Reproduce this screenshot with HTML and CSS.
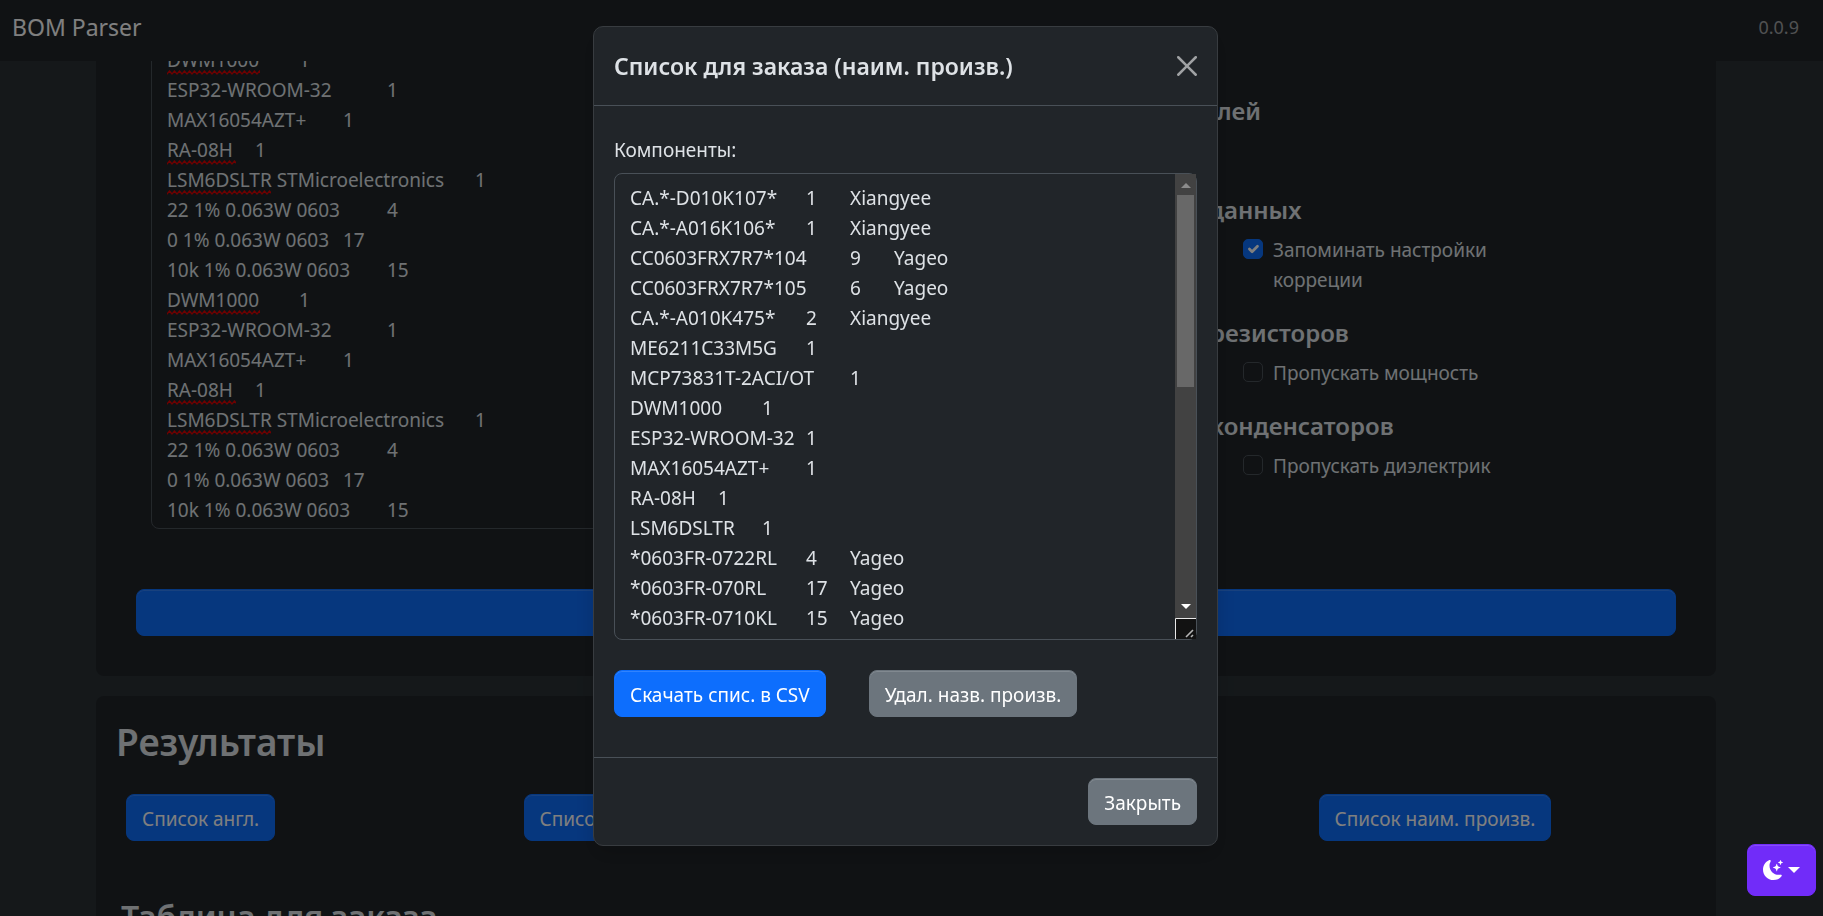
FILE: index.html
```html
<!DOCTYPE html>
<html lang="ru">
<head>
<meta charset="utf-8">
<title>BOM Parser</title>
<link rel="stylesheet" href="styles.css">
</head>
<body>
<header class="navbar">
  <a class="brand" href="#">BOM Parser</a>
  <span class="version">0.0.9</span>
</header>

<main class="page">
  <section class="panel panel-input">
    <div class="input-grid">
      <div class="source">
        <textarea class="field source-field" spellcheck="false" aria-label="Исходный список">DWM1000 	1
ESP32-WROOM-32 		1
MAX16054AZT+ 	1
RA-08H 	1
LSM6DSLTR STMicroelectronics 	1
22 1% 0.063W 0603 	4
0 1% 0.063W 0603 	17
10k 1% 0.063W 0603 	15
DWM1000 	1
ESP32-WROOM-32 		1
MAX16054AZT+ 	1
RA-08H 	1
LSM6DSLTR STMicroelectronics 	1
22 1% 0.063W 0603 	4
0 1% 0.063W 0603 	17
10k 1% 0.063W 0603 	15</textarea>
        <svg class="spelling" width="120" height="480" aria-hidden="true">
          <defs>
            <pattern id="wave" width="5" height="5" patternUnits="userSpaceOnUse">
              <path d="M-1 4.8 0 4 2.5 1 5 4 6 4.8" fill="none" stroke="#e00000" stroke-width="1.3"/>
            </pattern>
          </defs>
          <g fill="url(#wave)">
            <rect x="0" y="25" width="93" height="5"/>
            <rect x="0" y="115" width="69" height="5"/>
            <rect x="0" y="145" width="104" height="5"/>
            <rect x="0" y="265" width="93" height="5"/>
            <rect x="0" y="355" width="69" height="5"/>
            <rect x="0" y="385" width="104" height="5"/>
          </g>
        </svg>
      </div>
      <div class="settings">
        <div class="group group-empty"><h3 class="group-title">Производителей</h3></div>
        <div class="group">
          <h3 class="group-title">Сохранение данных</h3>
          <label class="check"><input type="checkbox" checked><span>Запоминать настройки корреции</span></label>
        </div>
        <div class="group">
          <h3 class="group-title">Параметры: резисторов</h3>
          <label class="check"><input type="checkbox"><span>Пропускать мощность</span></label>
        </div>
        <div class="group">
          <h3 class="group-title">Параметры: конденсаторов</h3>
          <label class="check"><input type="checkbox"><span>Пропускать диэлектрик</span></label>
        </div>
      </div>
    </div>
    <button class="btn btn-primary btn-wide" type="button" aria-label="Обработать"></button>
  </section>

  <section class="panel panel-results">
    <h1 class="results-title">Результаты</h1>
    <div class="results-row">
      <div><button class="btn btn-primary" type="button">Список англ.</button></div>
      <div><button class="btn btn-primary" type="button">Список рус.</button></div>
      <div><button class="btn btn-primary" type="button">Список</button></div>
      <div><button class="btn btn-primary" type="button">Список наим. произв.</button></div>
    </div>
    <h2 class="table-title">Таблица для заказа</h2>
  </section>
</main>

<div class="backdrop">
  <div class="modal" role="dialog" aria-modal="true" aria-labelledby="modal-title">
    <div class="modal-header">
      <h2 class="modal-title" id="modal-title">Список для заказа (наим. произв.)</h2>
      <button class="close" type="button" aria-label="Закрыть окно">
        <svg viewBox="0 0 16 16" width="20" height="20" fill="currentColor"><path d="M.293.293a1 1 0 0 1 1.414 0L8 6.586 14.293.293a1 1 0 1 1 1.414 1.414L9.414 8l6.293 6.293a1 1 0 0 1-1.414 1.414L8 9.414l-6.293 6.293a1 1 0 0 1-1.414-1.414L6.586 8 .293 1.707a1 1 0 0 1 0-1.414z"/></svg>
      </button>
    </div>
    <div class="modal-body">
      <label class="label" for="parts">Компоненты:</label>
      <div class="parts">
        <textarea class="field parts-field" id="parts" rows="15" spellcheck="false">CA.*-D010K107*	1	Xiangyee
CA.*-A016K106*	1	Xiangyee
CC0603FRX7R7*104	9	Yageo
CC0603FRX7R7*105	6	Yageo
CA.*-A010K475*	2	Xiangyee
ME6211C33M5G	1
MCP73831T-2ACI/OT	1
DWM1000 	1
ESP32-WROOM-32	1
MAX16054AZT+	1
RA-08H	1
LSM6DSLTR	1
*0603FR-0722RL	4	Yageo
*0603FR-070RL	17	Yageo
*0603FR-0710KL	15	Yageo</textarea>
        <div class="scrollbar" aria-hidden="true">
          <span class="arrow arrow-up"></span>
          <span class="thumb"></span>
          <span class="arrow arrow-down"></span>
          <svg class="grip" width="21" height="21" viewBox="0 0 21 21"><path d="M0 0H21V21H0z" fill="#121212"/><path d="M.5 21V.5H21" fill="none" stroke="#e8e8e8"/><path d="M11 19 18 12M16 19 18 17" stroke="#b5b5b5" stroke-width="1.6"/></svg>
        </div>
      </div>
      <div class="actions">
        <button class="btn btn-primary" type="button">Скачать спис. в CSV</button>
        <button class="btn btn-secondary" type="button">Удал. назв. произв.</button>
      </div>
    </div>
    <div class="modal-footer">
      <button class="btn btn-secondary" type="button">Закрыть</button>
    </div>
  </div>
</div>

<button class="theme" type="button" aria-label="Тема">
  <svg viewBox="0 0 16 16" width="20" height="20" fill="currentColor"><path d="M6 .278a.77.77 0 0 1 .08.858 7.2 7.2 0 0 0-.878 3.46c0 4.021 3.278 7.277 7.318 7.277q.792-.001 1.533-.16a.79.79 0 0 1 .81.316.73.73 0 0 1-.031.893A8.35 8.35 0 0 1 8.344 16C3.734 16 0 12.286 0 7.71 0 4.266 2.114 1.312 5.124.06A.75.75 0 0 1 6 .278"/><path d="M10.794 3.148a.217.217 0 0 1 .412 0l.387 1.162c.173.518.579.924 1.097 1.097l1.162.387a.217.217 0 0 1 0 .412l-1.162.387a1.73 1.73 0 0 0-1.097 1.097l-.387 1.162a.217.217 0 0 1-.412 0l-.387-1.162A1.73 1.73 0 0 0 9.31 6.593l-1.162-.387a.217.217 0 0 1 0-.412l1.162-.387a1.73 1.73 0 0 0 1.097-1.097zM13.863.099a.145.145 0 0 1 .274 0l.258.774c.115.346.386.617.732.732l.774.258a.145.145 0 0 1 0 .274l-.774.258a1.16 1.16 0 0 0-.732.732l-.258.774a.145.145 0 0 1-.274 0l-.258-.774a1.16 1.16 0 0 0-.732-.732l-.774-.258a.145.145 0 0 1 0-.274l.774-.258c.346-.115.617-.386.732-.732z"/></svg>
  <span class="caret"></span>
</button>
</body>
</html>
```
FILE: styles.css
```css
* { box-sizing: border-box; }
body {
  margin: 0;
  height: 100vh;
  overflow: hidden;
  background: #2a3135;
  color: #dee2e6;
  font: 19px/30px "Noto Sans", "Open Sans", sans-serif;
}
h1, h2, h3 { margin: 0; font-weight: 600; }
button, textarea { font: inherit; }

.navbar {
  position: fixed;
  inset: 0 0 auto;
  z-index: 1;
  display: flex;
  justify-content: space-between;
  align-items: center;
  height: 61px;
  padding: 0 24px 8px 12px;
  background: #212529;
}
.brand { color: #fff; font-size: 23px; text-decoration: none; }
.version { color: #a0a2a4; font-size: 18px; }

.page {
  display: flex;
  flex-direction: column;
  gap: 20px;
  height: 100%;
  overflow: hidden;
  padding: 0 107px 0 96px;
}
.panel { flex: none; background: #212529; border-radius: 8px; }
.panel-input { padding: 37px 40px 40px; }
.input-grid {
  display: grid;
  grid-template-columns: 3fr 2fr;
  padding: 0 15px;
}
.source { position: relative; }
.field {
  display: block;
  width: 100%;
  margin: 0;
  border: 1px solid #495057;
  border-radius: 8px;
  background: #212529;
  color: #dee2e6;
  padding: 7px 15px;
  tab-size: 44px;
  white-space: pre;
  overflow: hidden;
  resize: none;
  outline: 0;
}
.source-field { height: 492px; padding-bottom: 0; }
.spelling { position: absolute; left: 16px; top: 8px; }

.settings { display: flex; flex-direction: column; gap: 23px; padding-top: 59px; }
.group { display: flex; flex-direction: column; gap: 10px; }
.group-empty { min-height: 76px; }
.group-title { font-size: 24px; line-height: 30px; white-space: nowrap; }
.check { display: flex; gap: 10px; margin-left: 186px; width: 260px; }
.check input {
  appearance: none;
  flex: none;
  width: 20px;
  height: 20px;
  margin: 4px 0 0;
  border: 1px solid #495057;
  border-radius: 5px;
}
.check input:checked {
  border-color: #0d6efd;
  background: #0d6efd url("data:image/svg+xml,%3Csvg xmlns='http://www.w3.org/2000/svg' viewBox='0 0 20 20'%3E%3Cpath fill='none' stroke='%23fff' stroke-linecap='round' stroke-linejoin='round' stroke-width='3' d='m6 10 3 3 6-6'/%3E%3C/svg%3E") center / 100%;
}

.btn {
  min-height: 47px;
  padding: 8px 15px 6px;
  border: 1px solid;
  border-radius: 8px;
  color: #fff;
  white-space: nowrap;
  box-shadow: inset 0 1px 0 rgba(255, 255, 255, .15);
}
.btn-primary { background: #0d6efd; border-color: #0d6efd; }
.btn-secondary { background: #6c757d; border-color: #6c757d; }
.btn-wide { display: block; width: 100%; margin-top: 60px; }

.panel-results { padding: 22px 0 40px 20px; }
.results-title { font-size: 37px; line-height: 48px; }
.results-row {
  display: grid;
  grid-template-columns: repeat(4, 1fr);
  padding: 28px 0 56px 10px;
}
.table-title { padding-left: 5px; font-size: 32px; line-height: 40px; }

.backdrop {
  position: fixed;
  inset: 0;
  z-index: 2;
  display: flex;
  justify-content: center;
  align-items: flex-start;
  padding: 26px 12px 26px 0;
  background: rgba(0, 0, 0, .5);
}
.modal {
  width: 625px;
  border: 1px solid #383c40;
  border-radius: 10px;
  background: #212529;
  box-shadow: 0 10px 20px rgba(0, 0, 0, .15);
}
.modal-header {
  display: flex;
  justify-content: space-between;
  align-items: center;
  padding: 20px;
  border-bottom: 1px solid #495057;
}
.modal-title { font-size: 23px; line-height: 38px; }
.close {
  display: flex;
  padding: 0;
  border: 0;
  background: none;
  color: #a0a2a4;
}
.modal-body { padding: 29px 20px 40px; }
.label { display: block; margin-bottom: 8px; }
.parts { position: relative; }
.parts-field { height: 467px; padding-top: 9px; }
.scrollbar {
  position: absolute;
  inset: 1px 1px 1px auto;
  display: flex;
  flex-direction: column;
  align-items: center;
  width: 21px;
  background: #424242;
}
.arrow { border: 5px solid transparent; }
.arrow-up { margin: 4px 0 7px; border-bottom-color: #8b8b8b; }
.arrow-down { margin: auto 0 4px; border-top-color: #fff; }
.thumb { width: 17px; height: 192px; background: #686868; }
.actions { display: flex; gap: 43px; margin-top: 30px; }
.modal-footer {
  display: flex;
  justify-content: flex-end;
  padding: 20px;
  border-top: 1px solid #495057;
}

.theme {
  position: fixed;
  right: 7px;
  bottom: 20px;
  z-index: 3;
  display: flex;
  align-items: center;
  gap: 5px;
  height: 52px;
  padding: 0 15px;
  border: 1px solid #712cf9;
  border-radius: 8px;
  background: #712cf9;
  color: #fff;
  box-shadow: inset 0 1px 0 rgba(255, 255, 255, .15);
}
.caret { border: 6px solid transparent; border-top-color: #fff; border-bottom: 0; }
```
